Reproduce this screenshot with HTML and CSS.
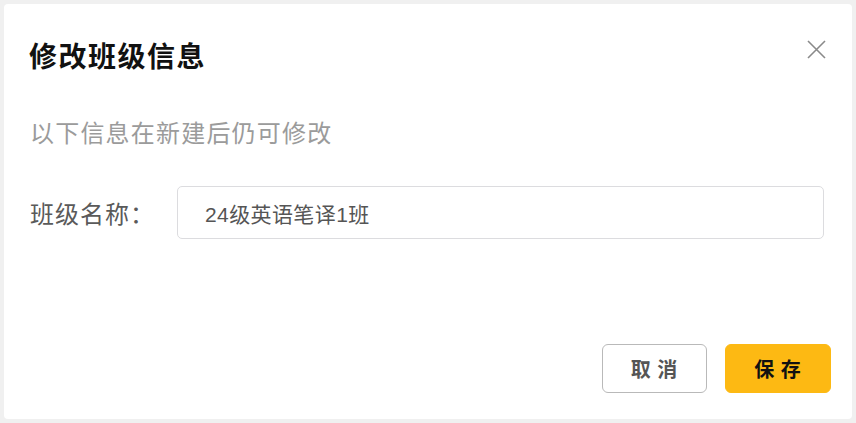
FILE: index.html
```html
<!DOCTYPE html>
<html lang="zh">
<head>
<meta charset="utf-8">
<link rel="stylesheet" href="styles.css">
</head>
<body>
<div class="dialog">
  <button class="close" aria-label="关闭">
    <svg width="19" height="19" viewBox="0 0 19 19"><path d="M1 1 L18 18 M18 1 L1 18" stroke="#8a8a8a" stroke-width="1.6" fill="none"/></svg>
  </button>
  <h1 class="title">修改班级信息</h1>
  <p class="hint">以下信息在新建后仍可修改</p>
  <div class="field">
    <label class="label">班级名称：</label>
    <div class="input">24级英语笔译1班</div>
  </div>
  <div class="footer">
    <button class="btn btn-cancel">取 消</button>
    <button class="btn btn-save">保 存</button>
  </div>
</div>
</body>
</html>
```
FILE: styles.css
```css
* { box-sizing: border-box; }
html, body { margin: 0; padding: 0; }
body {
  background: #f0f0f0;
  padding: 4px;
  width: 856px;
  height: 423px;
  font-family: "Noto Sans CJK SC", "Liberation Sans", sans-serif;
}
.dialog {
  position: relative;
  width: 848px;
  height: 415px;
  background: #fff;
  border-radius: 4px;
  padding: 31px 21px 0 26px;
  display: flex;
  flex-direction: column;
}
.close {
  position: absolute;
  top: 36px;
  right: 26px;
  width: 19px;
  height: 19px;
  padding: 0;
  border: 0;
  background: none;
  display: flex;
}
.title {
  margin: 0 0 0 -1px;
  font-size: 28px;
  line-height: 40px;
  font-weight: 700;
  color: #111;
  letter-spacing: 1.5px;
}
.hint {
  margin: 40px 0 0;
  font-size: 24px;
  line-height: 34px;
  color: #9b9b9b;
  letter-spacing: 1.2px;
}
.field {
  margin-top: 37px;
  display: flex;
  align-items: center;
}
.label {
  width: 147px;
  font-size: 24px;
  line-height: 34px;
  color: #5a5a5a;
  letter-spacing: 1px;
  white-space: nowrap;
}
.input {
  width: 647px;
  height: 53px;
  border: 1px solid #dcdcdf;
  border-radius: 5px;
  padding: 0 27px;
  display: flex;
  align-items: center;
  font-family: "Liberation Sans", "Noto Sans CJK SC", sans-serif;
  font-size: 21px;
  letter-spacing: 0.4px;
  color: #555;
}
.footer {
  margin-top: auto;
  margin-bottom: 26px;
  display: flex;
  justify-content: flex-end;
  gap: 18px;
}
.btn {
  width: 105px;
  height: 49px;
  border-radius: 6px;
  font-family: "Noto Sans CJK SC", sans-serif;
  font-size: 20px;
  font-weight: 700;
  letter-spacing: 1px;
  padding: 0;
}
.btn-cancel {
  background: #fff;
  border: 1px solid #b9b9b9;
  color: #555;
}
.btn-save {
  width: 106px;
  background: #fdb913;
  border: 1px solid #fdb913;
  color: #111;
}
```
